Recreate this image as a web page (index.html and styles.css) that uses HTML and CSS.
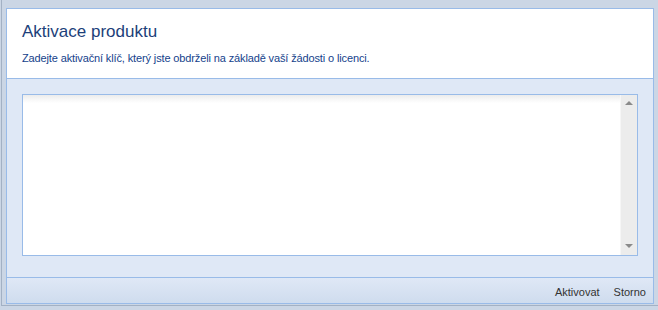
FILE: index.html
```html
<!DOCTYPE html>
<html lang="cs">

<head>
    <meta charset="UTF-8">
    <title>Aktivace produktu</title>
    <link rel="stylesheet" href="styles.css">
</head>

<body>
    <div class="frame">
        <div class="panel">
            <header>
                <h1>Aktivace produktu</h1>
                <p>Zadejte aktivační klíč, který jste obdrželi na základě vaší žádosti o licenci.</p>
            </header>
            <main>
                <div class="key-box">
                    <textarea spellcheck="false"></textarea>
                    <div class="scroll">
                        <b class="up"></b>
                        <b class="down"></b>
                    </div>
                </div>
            </main>
            <footer>
                <button>Aktivovat</button>
                <button>Storno</button>
            </footer>
        </div>
    </div>
</body>

</html>
```

FILE: styles.css
```css
body {
    margin: 0;
    width: 658px;
    height: 310px;
    background-color: #cbd6e5;
    font-family: Tahoma, "DejaVu Sans", sans-serif;
    overflow: hidden;
}

.frame {
    margin-left: 1px;
    width: 657px;
    height: 306px;
    border-left: 1px solid #a3b1c4;
    border-bottom: 1px solid #a3b1c4;
    padding: 8px 0 0 4px;
    box-sizing: border-box;
}

.panel {
    width: 648px;
    height: 296px;
    border: 1px solid #99bbe8;
    box-sizing: border-box;
    display: flex;
    flex-direction: column;
}

header {
    background-color: white;
    height: 70px;
    border-bottom: 1px solid #99bbe8;
    padding: 13px 15px 0;
    box-sizing: border-box;
}

header>h1 {
    margin: 0;
    font-family: "Liberation Sans", Arial, sans-serif;
    font-weight: normal;
    font-size: 17px;
    color: #1c3f7a;
}

header>p {
    margin: 10px 0 0;
    font-family: "Liberation Sans", Arial, sans-serif;
    font-size: 11px;
    letter-spacing: -0.13px;
    color: #15428b;
}

main {
    flex: 1;
    background-color: #dfe8f6;
    padding: 15px 15px 20px;
}

.key-box {
    display: flex;
    height: 162px;
    border: 1px solid #99bbe8;
    box-sizing: border-box;
    background: white linear-gradient(#ececec, #ffffff 8px);
}

.key-box>textarea {
    flex: 1;
    border: 0;
    outline: none;
    resize: none;
    background: transparent;
    overflow: hidden;
}

.scroll {
    width: 16px;
    background-color: #ececec;
    border-left: 1px solid #f6f6f6;
    display: flex;
    flex-direction: column;
    justify-content: space-between;
    align-items: center;
    padding: 6px 0 7px;
}

.scroll>b {
    width: 0;
    height: 0;
    border-left: 4px solid transparent;
    border-right: 4px solid transparent;
}

.scroll>.up {
    border-bottom: 4px solid #8a8a8a;
}

.scroll>.down {
    border-top: 4px solid #8a8a8a;
}

footer {
    height: 26px;
    border-top: 1px solid #99bbe8;
    background: linear-gradient(#dfe8f6, #cfdcee);
    display: flex;
    justify-content: flex-end;
    align-items: center;
    gap: 4px;
    padding: 2px 2px 0 0;
    box-sizing: border-box;
}

footer>button {
    border: 0;
    background: none;
    padding: 0 5px;
    font-family: "Liberation Sans", Arial, sans-serif;
    font-size: 11px;
    color: #333;
}
```
